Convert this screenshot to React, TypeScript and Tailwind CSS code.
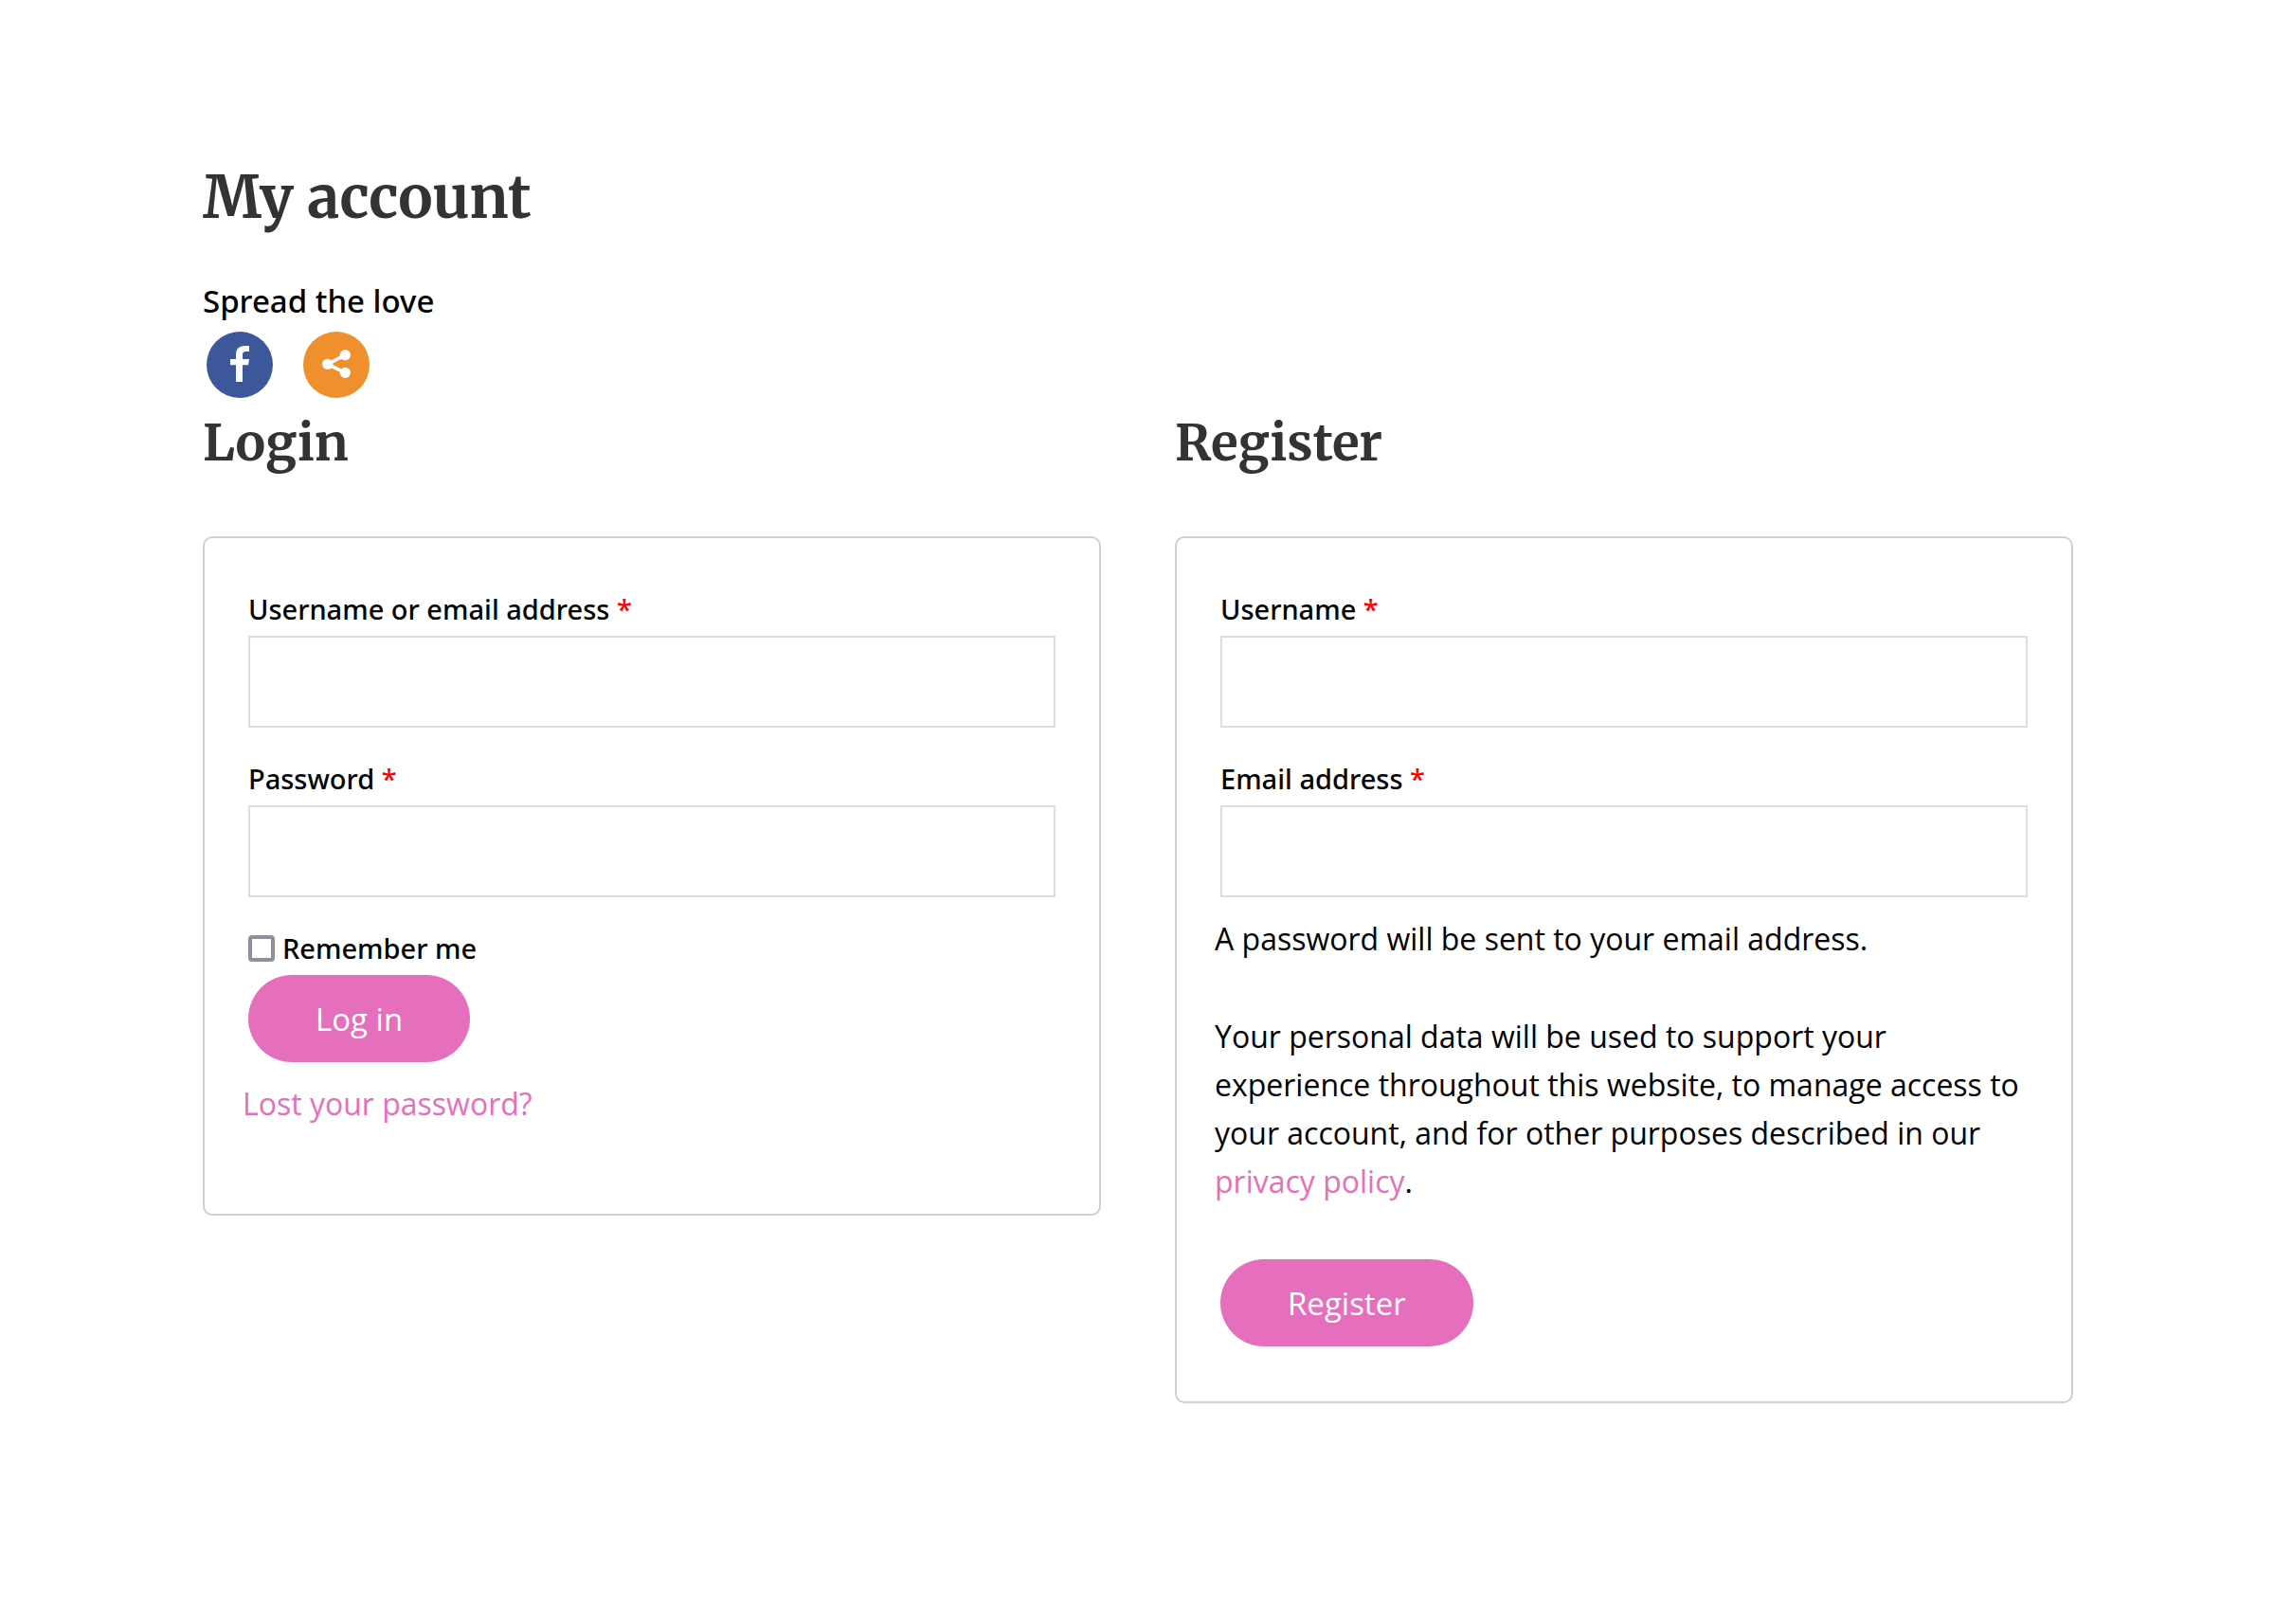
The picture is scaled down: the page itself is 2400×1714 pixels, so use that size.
import React from 'react';

type FieldProps = { id: string; label: string; type: string; autoComplete: string };

function Field({ id, label, type, autoComplete }: FieldProps) {
  return (
    <div className="flex flex-col px-1.5">
      <label htmlFor={id} className="font-['Noto_Sans',sans-serif] text-[29px] leading-[57px] font-medium">
        {label} <span className="text-[#ff0000]">*</span>
      </label>
      <input
        id={id}
        type={type}
        autoComplete={autoComplete}
        required
        className="h-[97px] w-full border-2 border-[#dddddd] bg-white px-6 text-[32px]"
      />
    </div>
  );
}

function PillButton({ children }: { children: React.ReactNode }) {
  return (
    <button
      type="submit"
      className="mx-1.5 h-[92px] self-start rounded-full bg-[#e56fbd] px-[71px] text-[33px] leading-[51px] text-white"
    >
      {children}
    </button>
  );
}

function Heading({ children }: { children: React.ReactNode }) {
  return (
    <h2 className="mb-[62px] font-['Merriweather','Liberation_Serif',serif] text-[53px] leading-[74px] font-bold text-[#333333]">
      {children}
    </h2>
  );
}

const cardClass =
  'flex flex-col rounded-[10px] border-2 border-[#d3ced2] px-10 pt-[46px]';

export default function App() {
  return (
    <main className="min-h-screen bg-white pt-[168px] pr-[212px] pb-20 pl-[214px] font-['Open_Sans',sans-serif] text-[32px] leading-[51px] text-black">
      <h1 className="font-['Merriweather','Liberation_Serif',serif] text-[61px] leading-[82px] font-bold text-[#333333]">
        My account
      </h1>

      <section className="mt-[42px]">
        <p className="font-['Noto_Sans',sans-serif] text-[33px] font-medium">Spread the love</p>
        <div className="mt-[7px] flex gap-8 px-1">
          <a href="#facebook" aria-label="Facebook" className="size-[70px] rounded-full bg-[#3c589a]">
            <svg viewBox="0 0 210 210" className="size-full" fill="#fff" aria-hidden="true">
              <path d="M93 159V106H75V87H93V73C93 54 104 45 121 45H135V63H124C117 63 114 67 114 74V87H135L132 106H114V159Z" />
            </svg>
          </a>
          <a href="#share" aria-label="Share" className="size-[70px] rounded-full bg-[#ef8f2d]">
            <svg viewBox="0 0 210 210" className="size-full" fill="#fff" aria-hidden="true">
              <path d="M133 74L77 103L133 130" fill="none" stroke="#fff" strokeWidth="11" />
              <circle cx="77" cy="103" r="17" />
              <circle cx="133" cy="74" r="17" />
              <circle cx="133" cy="130" r="17" />
            </svg>
          </a>
        </div>
      </section>

      <div className="mt-2.5 grid grid-cols-2 items-start gap-[78px]">
        <section>
          <Heading>Login</Heading>
          <form className={`${cardClass} pb-[91px]`}>
            <div className="flex flex-col gap-[25px]">
              <Field id="login-name" label="Username or email address" type="text" autoComplete="username" />
              <Field id="login-password" label="Password" type="password" autoComplete="current-password" />
              <label className="flex items-center gap-2 px-1.5 font-['Noto_Sans',sans-serif] text-[29px] leading-[57px] font-medium">
                <input
                  type="checkbox"
                  className="size-7 appearance-none rounded-[4px] border-4 border-[#8f8f9d] bg-white checked:bg-[#e56fbd]"
                />
                Remember me
              </label>
            </div>
            <PillButton>Log in</PillButton>
            <p className="mt-[18px]">
              <a href="#lost-password" className="text-[#e56fbd]">
                Lost your password?
              </a>
            </p>
          </form>
        </section>

        <section>
          <Heading>Register</Heading>
          <form className={`${cardClass} pb-[58px]`}>
            <div className="flex flex-col gap-[25px]">
              <Field id="register-name" label="Username" type="text" autoComplete="username" />
              <Field id="register-email" label="Email address" type="email" autoComplete="email" />
            </div>
            <p className="mt-[18px]">A password will be sent to your email address.</p>
            <p className="mt-[52px] mb-[57px]">
              Your personal data will be used to support your experience throughout this website, to manage
              access to your account, and for other purposes described in our{' '}
              <a href="#privacy" className="text-[#e56fbd]">
                privacy policy
              </a>
              .
            </p>
            <PillButton>Register</PillButton>
          </form>
        </section>
      </div>
    </main>
  );
}
